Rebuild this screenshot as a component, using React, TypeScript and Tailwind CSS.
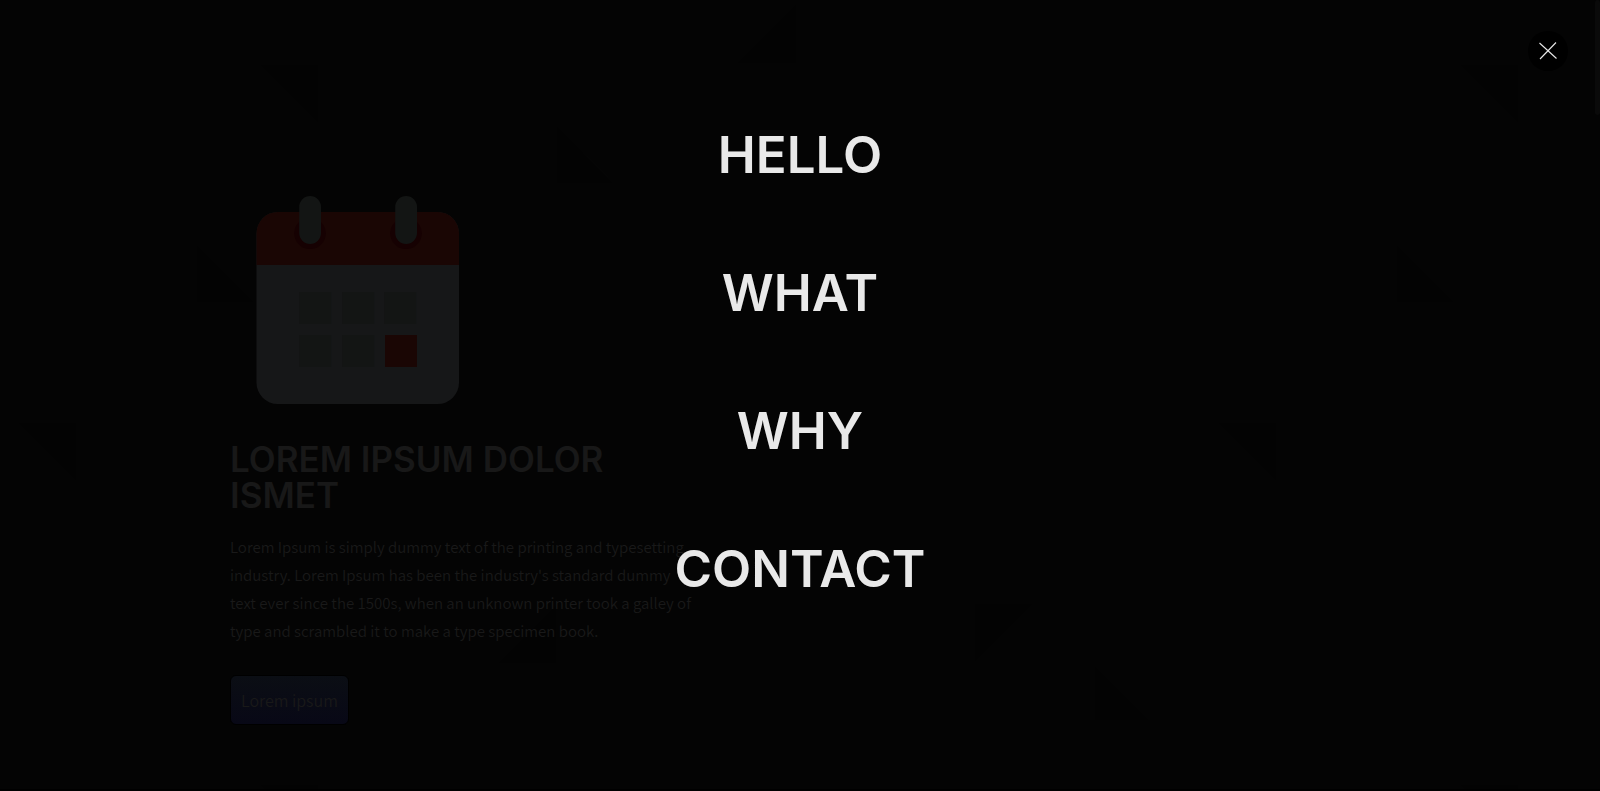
const menu = ['Hello', 'What', 'Why', 'Contact'];

const cells = [
  [298, 292], [341, 292], [383, 292],
  [298, 335], [341, 335],
];

function Backdrop() {
  return (
    <svg className="absolute inset-0 h-full w-full" aria-hidden="true">
      <defs>
        <pattern id="triangles" width="1200" height="720" patternUnits="userSpaceOnUse">
          <g fill="#030303">
            <path d="M260 65H318V123Z" />
            <path d="M557 126V183H613Z" />
            <path d="M197 245V302H254Z" />
            <path d="M18 423H76V481Z" />
            <path d="M975 604H1033L975 662Z" />
            <path d="M1095 666V723H1152Z" />
            <path d="M498 663H556V605Z" />
          </g>
        </pattern>
      </defs>
      <rect width="100%" height="100%" fill="url(#triangles)" />
      <path d="M738 63H796V5Z" fill="#030303" />
    </svg>
  );
}

function Calendar() {
  return (
    <svg className="h-64 w-64" viewBox="230 172 256 256" aria-hidden="true">
      <rect x="256.500" y="212" width="202.500" height="192" rx="21.300" fill="#161718" />
      <path d="M256.500 265V233.300A21.300 21.300 0 0 1 277.800 212H437.700A21.300 21.300 0 0 1 459 233.300V265Z" fill="#1a0604" />
      <circle cx="310" cy="233.300" r="15.800" fill="#160102" />
      <circle cx="406" cy="233.300" r="15.800" fill="#160102" />
      <rect x="299.200" y="196" width="21.800" height="48" rx="10.900" fill="#131514" />
      <rect x="395.200" y="196" width="21.800" height="48" rx="10.900" fill="#131514" />
      {cells.map(([x, y]) => (
        <rect key={`${x}-${y}`} x={x + 1.2} y={y} width="32" height="32" fill="#131514" />
      ))}
      <rect x="385" y="335" width="32" height="32" fill="#1a0604" />
    </svg>
  );
}

export default function App() {
  return (
    <div className="relative min-h-screen overflow-hidden border-b-2 border-black bg-[#040404] font-['Noto_Sans_CJK_SC',sans-serif] font-[350]">
      <Backdrop />
      <main className="relative mx-auto max-w-[1140px] pt-[172px]">
        <div className="flex max-w-[462px] flex-col items-start">
          <Calendar />
          <h1 className="mt-[13px] font-['Inter',sans-serif] text-[35px] leading-9 font-semibold text-[#181818] uppercase">
            Lorem ipsum dolor ismet
          </h1>
          <p className="mt-5 text-[15px] leading-7 text-[#191919]">
            Lorem Ipsum is simply dummy text of the printing and typesetting industry. Lorem Ipsum
            has been the industry&apos;s standard dummy text ever since the 1500s, when an unknown
            printer took a galley of type and scrambled it to make a type specimen book.
          </p>
          <button
            type="button"
            className="mt-[30px] h-[50px] rounded-md border border-black bg-linear-to-b from-[#0b0e14] to-[#080816] px-[10px] text-base font-[350] text-[#191919]"
          >
            Lorem ipsum
          </button>
        </div>
      </main>

      <div className="fixed inset-0">
        <nav aria-label="Main" className="pt-[86px]">
          <ul>
            {menu.map((item) => (
              <li key={item} className="flex h-[138px] items-center justify-center">
                <a
                  href={`#${item.toLowerCase()}`}
                  className="font-['Inter',sans-serif] text-[51px] leading-[60px] font-semibold text-[#e9e9e9] uppercase"
                >
                  {item}
                </a>
              </li>
            ))}
          </ul>
        </nav>
        <button
          type="button"
          aria-label="Close menu"
          className="absolute top-[31px] right-8 flex size-10 items-center justify-center rounded-full bg-black"
        >
          <svg className="size-5" viewBox="0 0 20 20" fill="none" stroke="#e9e9e9" strokeWidth="1.100" aria-hidden="true">
            <path d="M1.500 2L18.500 17.500M18 1.500L2 18" />
          </svg>
        </button>
        <div className="absolute top-0 right-0 h-[115px] w-[5px] rounded-full bg-[#0a0a0a]" />
      </div>
    </div>
  );
}
